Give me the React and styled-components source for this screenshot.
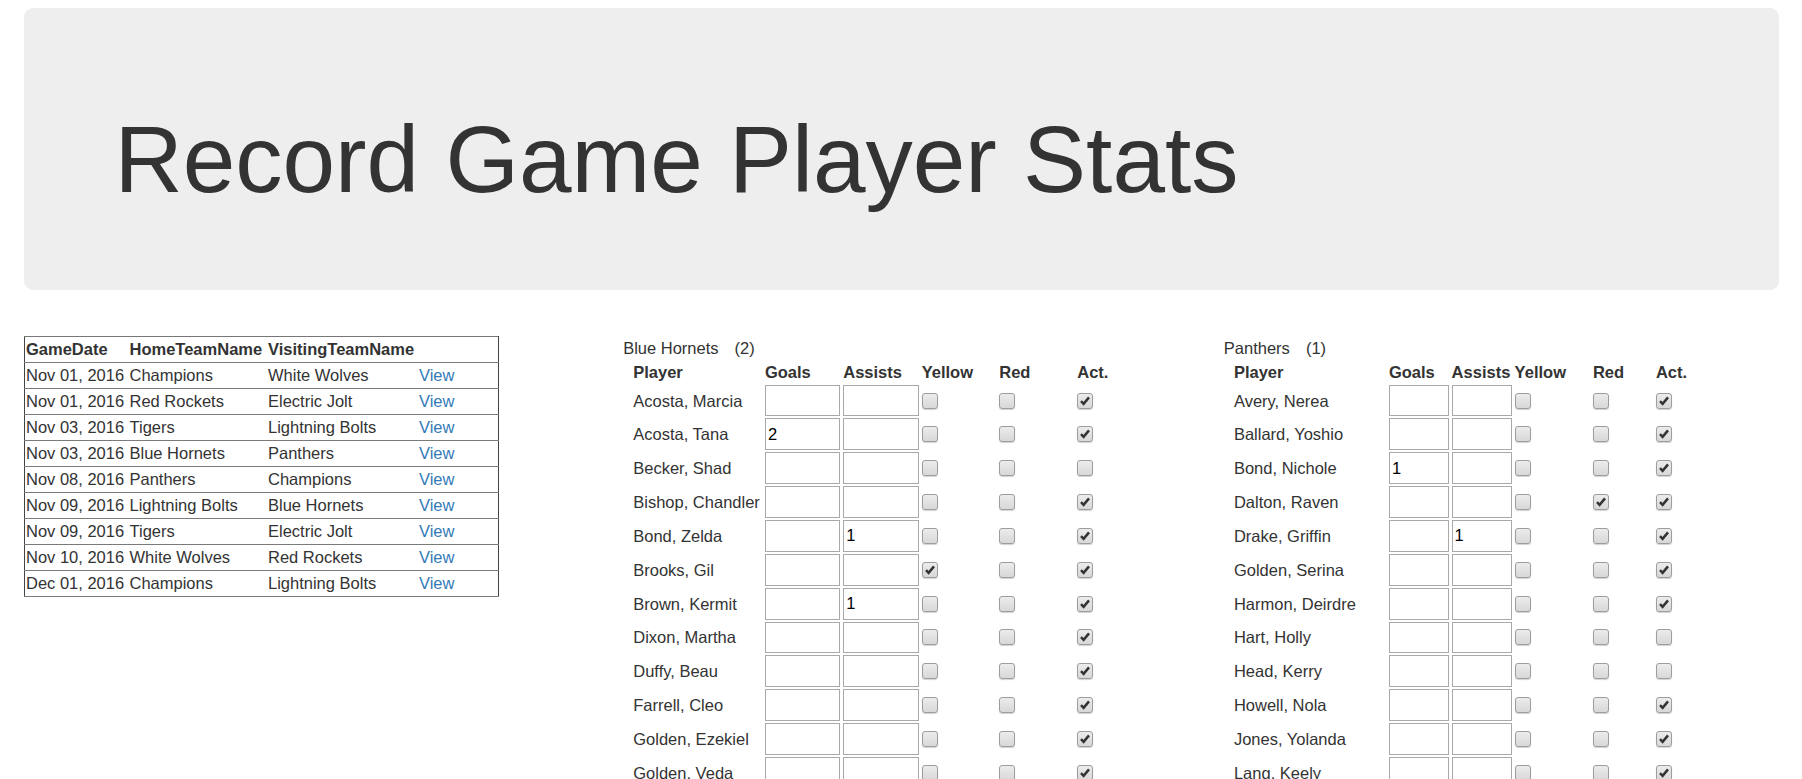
import React from 'react'
import styled, { createGlobalStyle } from 'styled-components'

const GlobalStyle = createGlobalStyle`
  html, body {
    margin: 0;
    padding: 0;
    background: #fff;
  }
  body {
    font-family: "Liberation Sans", Arial, Helvetica, sans-serif;
    font-size: 16.5px;
    color: #333;
    overflow: hidden;
  }
`

const Page = styled.div`
  padding: 8px 22.5px 0;
`

const Jumbotron = styled.header`
  box-sizing: border-box;
  height: 282px;
  padding: 99px 90px 0 91px;
  margin: 0 1px 45px;
  background: #eee;
  border-radius: 9px;
`

const Title = styled.h1`
  margin: 0;
  font-size: 94.5px;
  font-weight: 400;
  line-height: 104px;
  color: #333;
`

const Columns = styled.div`
  display: grid;
  grid-template-columns: repeat(3, 1fr);
  column-gap: 45px;
  align-items: start;
`

const Column = styled.section``

const GamesTable = styled.table`
  border-collapse: collapse;
  table-layout: fixed;
  width: 474px;
  margin: 1px 0 0 1px;
  border-left: 1px solid #444;
  border-right: 1px solid #444;
  border-top: 1px solid #777;
  border-bottom: 1px solid #777;
`

const GameRow = styled.tr`
  border-bottom: 1px solid #7a7a7a;
`

const GameCell = styled.td`
  padding: 1px 1.5px 2px;
  line-height: 22px;
  white-space: nowrap;
  text-align: left;
  font-weight: ${(p) => (p.$head ? 700 : 400)};
`

const ViewLink = styled.a`
  color: #337ab7;
  text-decoration: none;
  cursor: pointer;
`

const TeamLabel = styled.div`
  padding-top: 2.6px;
  margin-bottom: 3px;
  line-height: 20px;
`

const Count = styled.span`
  margin-left: 16px;
`

const StatsTable = styled.table`
  border-collapse: collapse;
  table-layout: fixed;
  margin-left: 8.6px;
`

const HeadCell = styled.th`
  padding: 1px 1.5px 2px;
  line-height: 20px;
  font-weight: 700;
  text-align: left;
  white-space: nowrap;
  vertical-align: bottom;
`

const Cell = styled.td`
  padding: 1px 1.5px;
  line-height: 20px;
  white-space: nowrap;
  vertical-align: middle;
`

const NumInput = styled.input`
  display: block;
  box-sizing: border-box;
  width: 100%;
  height: 31.85px;
  margin: 0;
  padding: 0 2px;
  border: 1px solid #a9a9a9;
  background: #fff;
  font-family: "Liberation Sans", Arial, sans-serif;
  font-size: 16.5px;
  color: #000;
  outline: none;
`

const Check = styled.span`
  display: block;
  box-sizing: border-box;
  width: 16px;
  height: 16px;
  border: 1px solid #9d9d9d;
  border-radius: 3px;
  background: linear-gradient(#ececec, #d8d8d8);
  box-shadow: 0 1px 1px rgba(0, 0, 0, 0.18);

  svg {
    display: block;
    width: 14px;
    height: 14px;
  }
`

const games = [
  ['Nov 01, 2016', 'Champions', 'White Wolves'],
  ['Nov 01, 2016', 'Red Rockets', 'Electric Jolt'],
  ['Nov 03, 2016', 'Tigers', 'Lightning Bolts'],
  ['Nov 03, 2016', 'Blue Hornets', 'Panthers'],
  ['Nov 08, 2016', 'Panthers', 'Champions'],
  ['Nov 09, 2016', 'Lightning Bolts', 'Blue Hornets'],
  ['Nov 09, 2016', 'Tigers', 'Electric Jolt'],
  ['Nov 10, 2016', 'White Wolves', 'Red Rockets'],
  ['Dec 01, 2016', 'Champions', 'Lightning Bolts'],
]

// name, goals, assists, yellow, red, active
const hornets = [
  ['Acosta, Marcia', '', '', 0, 0, 1],
  ['Acosta, Tana', '2', '', 0, 0, 1],
  ['Becker, Shad', '', '', 0, 0, 0],
  ['Bishop, Chandler', '', '', 0, 0, 1],
  ['Bond, Zelda', '', '1', 0, 0, 1],
  ['Brooks, Gil', '', '', 1, 0, 1],
  ['Brown, Kermit', '', '1', 0, 0, 1],
  ['Dixon, Martha', '', '', 0, 0, 1],
  ['Duffy, Beau', '', '', 0, 0, 1],
  ['Farrell, Cleo', '', '', 0, 0, 1],
  ['Golden, Ezekiel', '', '', 0, 0, 1],
  ['Golden, Veda', '', '', 0, 0, 1],
]

const panthers = [
  ['Avery, Nerea', '', '', 0, 0, 1],
  ['Ballard, Yoshio', '', '', 0, 0, 1],
  ['Bond, Nichole', '1', '', 0, 0, 1],
  ['Dalton, Raven', '', '', 0, 1, 1],
  ['Drake, Griffin', '', '1', 0, 0, 1],
  ['Golden, Serina', '', '', 0, 0, 1],
  ['Harmon, Deirdre', '', '', 0, 0, 1],
  ['Hart, Holly', '', '', 0, 0, 0],
  ['Head, Kerry', '', '', 0, 0, 0],
  ['Howell, Nola', '', '', 0, 0, 1],
  ['Jones, Yolanda', '', '', 0, 0, 1],
  ['Lang, Keely', '', '', 0, 0, 1],
]

const CheckBox = ({ checked }) => (
  <Check>
    {checked ? (
      <svg viewBox="0 0 14 14">
        <path d="M3 7.2 L5.6 9.8 L11 3.4" fill="none" stroke="#333" strokeWidth="2.5" />
      </svg>
    ) : null}
  </Check>
)

const TeamStats = ({ team, score, players, widths }) => {
  const total = widths.reduce((a, b) => a + b, 0)
  return (
    <Column>
      <TeamLabel>
        {team}
        <Count>({score})</Count>
      </TeamLabel>
      <StatsTable style={{ width: total }}>
        <colgroup>
          {widths.map((w, i) => (
            <col key={i} style={{ width: w }} />
          ))}
        </colgroup>
        <thead>
          <tr>
            <HeadCell>Player</HeadCell>
            <HeadCell>Goals</HeadCell>
            <HeadCell>Assists</HeadCell>
            <HeadCell>Yellow</HeadCell>
            <HeadCell>Red</HeadCell>
            <HeadCell>Act.</HeadCell>
          </tr>
        </thead>
        <tbody>
          {players.map(([name, goals, assists, yellow, red, act]) => (
            <tr key={name}>
              <Cell>{name}</Cell>
              <Cell>
                <NumInput type="text" defaultValue={goals} />
              </Cell>
              <Cell>
                <NumInput type="text" defaultValue={assists} />
              </Cell>
              <Cell>
                <CheckBox checked={yellow} />
              </Cell>
              <Cell>
                <CheckBox checked={red} />
              </Cell>
              <Cell>
                <CheckBox checked={act} />
              </Cell>
            </tr>
          ))}
        </tbody>
      </StatsTable>
    </Column>
  )
}

const App = () => {
  return (
    <Page>
      <GlobalStyle />
      <Jumbotron>
        <Title>Record Game Player Stats</Title>
      </Jumbotron>
      <Columns>
        <Column>
          <GamesTable>
            <colgroup>
              <col style={{ width: 104 }} />
              <col style={{ width: 138.5 }} />
              <col style={{ width: 151 }} />
              <col style={{ width: 80.5 }} />
            </colgroup>
            <thead>
              <GameRow>
                <GameCell as="th" $head>GameDate</GameCell>
                <GameCell as="th" $head>HomeTeamName</GameCell>
                <GameCell as="th" $head>VisitingTeamName</GameCell>
                <GameCell as="th" $head></GameCell>
              </GameRow>
            </thead>
            <tbody>
              {games.map(([date, home, away], i) => (
                <GameRow key={i}>
                  <GameCell>{date}</GameCell>
                  <GameCell>{home}</GameCell>
                  <GameCell>{away}</GameCell>
                  <GameCell>
                    <ViewLink>View</ViewLink>
                  </GameCell>
                </GameRow>
              ))}
            </tbody>
          </GamesTable>
        </Column>
        <TeamStats
          team="Blue Hornets"
          score={2}
          players={hornets}
          widths={[131.7, 78.3, 78.4, 77.6, 78, 78]}
        />
        <TeamStats
          team="Panthers"
          score={1}
          players={panthers}
          widths={[155, 62.7, 63, 78.3, 63, 63]}
        />
      </Columns>
    </Page>
  )
}

export default App
